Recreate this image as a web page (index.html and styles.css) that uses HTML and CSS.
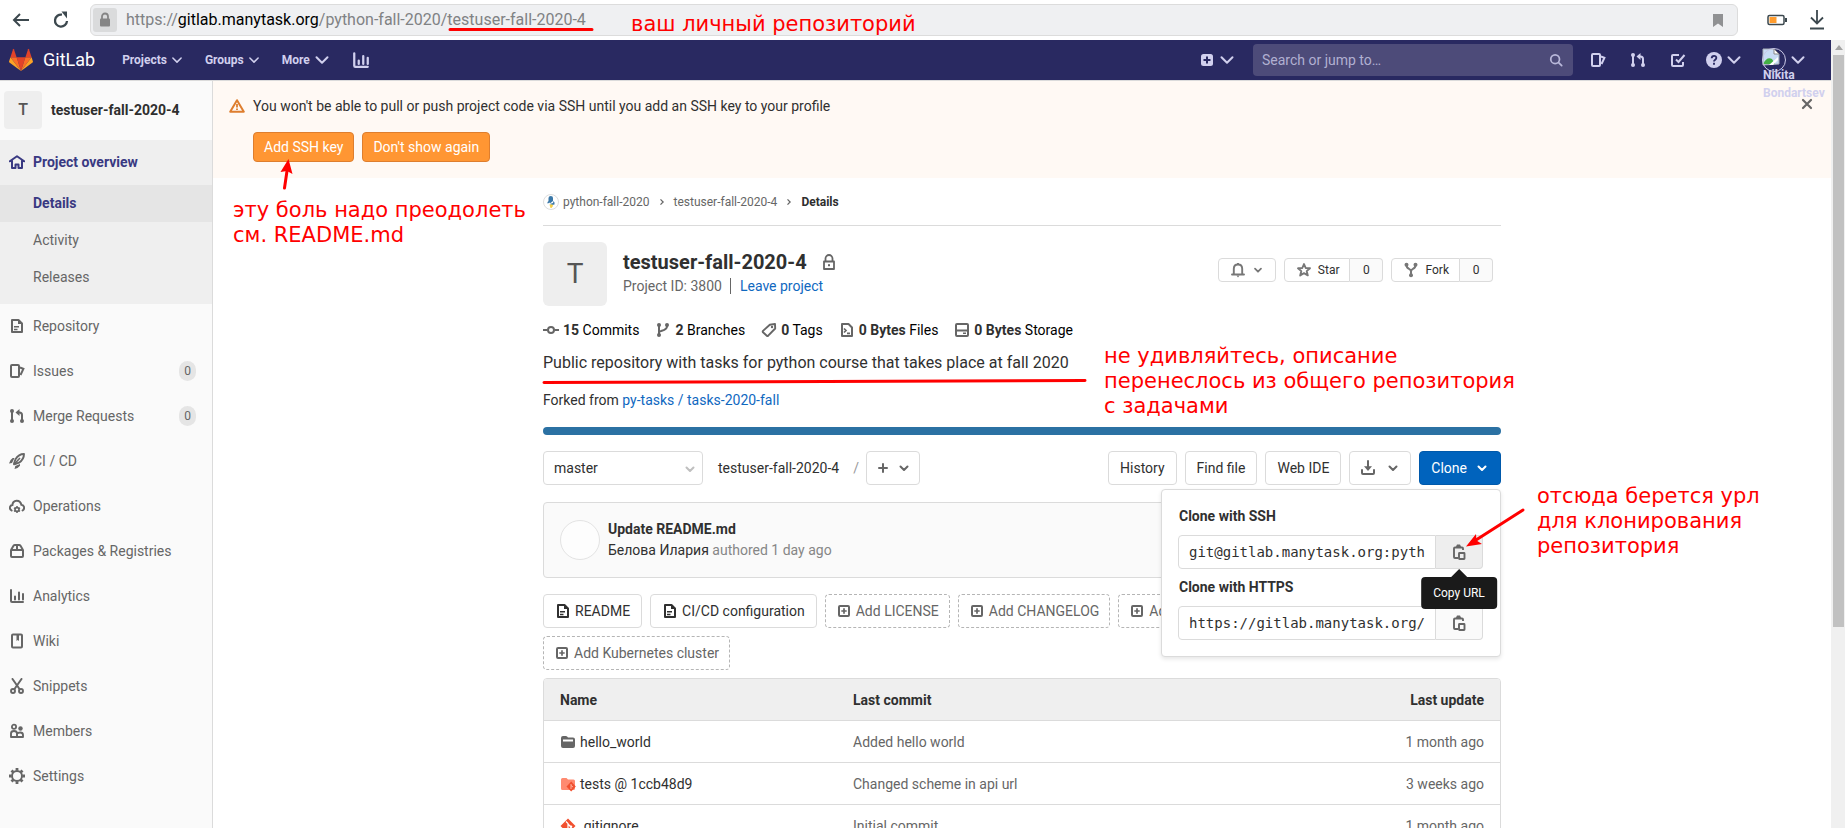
FILE: index.html
```html
<!DOCTYPE html>
<html lang="en">
<head>
<meta charset="utf-8">
<title>testuser-fall-2020-4 · GitLab</title>
<link rel="stylesheet" href="styles.css">
</head>
<body>
<svg class="sprite" aria-hidden="true">
  <symbol id="chevron" viewBox="0 0 16 16"><path d="M4 6.300 8 10.300 12 6.300" fill="none" stroke="currentColor" stroke-width="2.300" stroke-linecap="round" stroke-linejoin="round"/></symbol>
  <symbol id="chevron-wide" viewBox="0 0 16 16"><path d="M2.500 5.300 8 10.800l5.500-5.500" fill="none" stroke="currentColor" stroke-width="2" stroke-linecap="round" stroke-linejoin="round"/></symbol>
  <symbol id="angle-right" viewBox="0 0 16 16"><path d="m6 4.500 3.500 3.500L6 11.500" fill="none" stroke="currentColor" stroke-width="1.700"/></symbol>
  <symbol id="home" viewBox="0 0 16 16"><path d="M.8 7.300 8 2.200l7.200 5.100M3 6.500V14h3.500v-3.500h3V14H13V6.500" fill="none" stroke="currentColor" stroke-width="2" stroke-linejoin="round" stroke-linecap="round"/></symbol>
  <symbol id="doc" viewBox="0 0 16 16"><path d="M3 2h6.500L13 5.500V14H3z" fill="none" stroke="currentColor" stroke-width="2" stroke-linejoin="round"/><path d="M9 2v4h4M5 8h5v1.500H5zM5 10.800h3.500v1.500H5z" fill="currentColor"/></symbol>
  <symbol id="issues" viewBox="0 0 16 16"><rect x="2" y="2" width="8" height="12" rx="1" fill="none" stroke="currentColor" stroke-width="2"/><path d="m11 4.500 3.400 1.300L11.500 12" fill="none" stroke="currentColor" stroke-width="2"/></symbol>
  <symbol id="merge" viewBox="0 0 16 16"><path d="M3 3v10M8 4.500h2.500Q13 4.500 13 7v6" fill="none" stroke="currentColor" stroke-width="2"/><path d="m10.500 1-4 3.500 4 3.500z" fill="currentColor"/><g fill="currentColor"><circle cx="3" cy="3" r="2"/><circle cx="3" cy="13" r="2"/><circle cx="13" cy="13" r="2"/></g></symbol>
  <symbol id="rocket" viewBox="0 0 16 16"><path d="M15 1c-4 0-6.500 1.800-8.500 5.300L5 10.500 6 11l4-1.300C13.400 7.500 15 5 15 1z" fill="none" stroke="currentColor" stroke-width="1.900" stroke-linejoin="round"/><path d="m11 5-6.500 7" stroke="currentColor" stroke-width="1.600"/><path d="M5.500 5H3.700Q.5 7 0 10.500l3-.5zM11 11v1.800Q9 15.600 5.500 16l.8-3z" fill="currentColor"/></symbol>
  <symbol id="cloud" viewBox="0 0 16 16"><path d="M2.600 12.500C-.5 10.500 1 7.300 3.400 7 3.800 1.500 11 1 12.400 6.800c3 .4 3.700 3.900 1.200 5.700" fill="none" stroke="currentColor" stroke-width="2" stroke-linecap="round"/><circle cx="8" cy="11.500" r="2" fill="none" stroke="currentColor" stroke-width="1.600"/><path d="M8 8v7M5 9.800l6 3.500M11 9.800l-6 3.500" stroke="currentColor" stroke-width="1.500"/><circle cx="8" cy="11.500" r="1.100" fill="#fafafa"/></symbol>
  <symbol id="package" viewBox="0 0 16 16"><path d="M2 7h12v6q0 1-1 1H3q-1 0-1-1zM2 7l2.500-4.200Q5 2 6 2h4q1 0 1.500.8L14 7M8 2v5" fill="none" stroke="currentColor" stroke-width="2" stroke-linejoin="round"/></symbol>
  <symbol id="chart" viewBox="0 0 16 16"><path d="M2 2v11q0 1 1 1h11M6 8.500v3M10 4.500v7M14 6v5.500" fill="none" stroke="currentColor" stroke-width="2" stroke-linecap="round"/></symbol>
  <symbol id="book" viewBox="0 0 16 16"><rect x="3" y="1.500" width="10" height="13" rx="1" fill="none" stroke="currentColor" stroke-width="2"/><path d="M7.500 2h2.500v6L8.700 7 7.500 8z" fill="currentColor"/></symbol>
  <symbol id="scissors" viewBox="0 0 16 16"><path d="m3.500 1 7 10M12.500 1l-7 10" stroke="currentColor" stroke-width="2" stroke-linecap="round"/><circle cx="4" cy="13" r="2" fill="none" stroke="currentColor" stroke-width="1.900"/><circle cx="12" cy="13" r="2" fill="none" stroke="currentColor" stroke-width="1.900"/></symbol>
  <symbol id="users" viewBox="0 0 16 16"><circle cx="5" cy="3.800" r="2.100" fill="none" stroke="currentColor" stroke-width="1.800"/><circle cx="11.500" cy="5.500" r="2.200" fill="currentColor"/><path d="M2 14V10.500q0-2.500 3-2.500t3 2.500V14zM8 14h6v-2q0-2.500-2.800-2.500T8.500 11" fill="none" stroke="currentColor" stroke-width="1.900" stroke-linejoin="round"/></symbol>
  <symbol id="gear" viewBox="0 0 16 16"><circle cx="8" cy="8" r="5" fill="none" stroke="currentColor" stroke-width="2"/><path d="M8 0v2.500M8 13.500V16M0 8h2.500M13.500 8H16M2.500 2.500l1.800 1.800M11.700 11.700l1.800 1.800M13.500 2.500l-1.800 1.800M4.300 11.700l-1.800 1.800" stroke="currentColor" stroke-width="2.800"/></symbol>
  <symbol id="warning" viewBox="0 0 16 16"><path d="M8 2.200 14.800 13.700H1.200z" fill="none" stroke="currentColor" stroke-width="2" stroke-linejoin="round"/><path d="M8 6v3.600M8 10.500v1.600" stroke="currentColor" stroke-width="1.800"/></symbol>
  <symbol id="lock" viewBox="0 0 16 16"><path d="M4.500 7V4.500a3.500 3.500 0 0 1 7 0V7M3 7.500h10V15H3z" fill="none" stroke="currentColor" stroke-width="1.800" stroke-linejoin="round"/><rect x="7" y="10.200" width="2" height="2" fill="currentColor"/></symbol>
  <symbol id="commit" viewBox="0 0 16 16"><circle cx="8" cy="8" r="3" fill="none" stroke="currentColor" stroke-width="2"/><path d="M0 8h4.500M11.500 8H16" stroke="currentColor" stroke-width="2"/></symbol>
  <symbol id="branch" viewBox="0 0 16 16"><path d="M4 3v10M4 10.500c0-2 8-1.500 8-6V3" fill="none" stroke="currentColor" stroke-width="2"/><g fill="currentColor"><circle cx="4" cy="3" r="2"/><circle cx="4" cy="13" r="2"/><circle cx="12" cy="3" r="2"/></g></symbol>
  <symbol id="tag" viewBox="0 0 16 16"><path d="M8.800 2.800 14 2l.2 4.500-7 7.200q-.7.600-1.400 0L2 10.300q-.6-.7 0-1.400z" fill="none" stroke="currentColor" stroke-width="1.900" stroke-linejoin="round"/><circle cx="11" cy="5" r="1.200" fill="currentColor"/></symbol>
  <symbol id="code-file" viewBox="0 0 16 16"><path d="M3 2h6.500L13 5.500V14H3z" fill="none" stroke="currentColor" stroke-width="2" stroke-linejoin="round"/><path d="m5 6.500 2 2-2 2M8 11.300h3" fill="none" stroke="currentColor" stroke-width="1.700"/></symbol>
  <symbol id="disk" viewBox="0 0 16 16"><path d="M2 3q0-1 1-1h10q1 0 1 1v10q0 1-1 1H3q-1 0-1-1zM2 8.500h12" fill="none" stroke="currentColor" stroke-width="2"/><path d="M9 10.500h3V12H9z" fill="currentColor"/></symbol>
  <symbol id="bell" viewBox="0 0 16 16"><path d="M2 12.500h12M3.800 12V6.800C3.800 4 5.500 2.500 8 2.500s4.200 1.500 4.200 4.300V12" fill="none" stroke="currentColor" stroke-width="1.900" stroke-linecap="round"/><path d="M6.500 13.500h3L8 15.500zM7 1h2v2H7z" fill="currentColor"/></symbol>
  <symbol id="star" viewBox="0 0 16 16"><path d="m8 2 1.700 4 4.300.3-3.300 2.800 1.100 4.300L8 11.100l-3.800 2.300 1.100-4.300L2 6.300 6.300 6z" fill="none" stroke="currentColor" stroke-width="1.900" stroke-linejoin="round"/></symbol>
  <symbol id="fork" viewBox="0 0 16 16"><path d="M3.500 3c0 5 4.500 3 4.500 6.500V13M12.500 3c0 5-4.500 3-4.500 6.500" fill="none" stroke="currentColor" stroke-width="2"/><g fill="currentColor"><circle cx="3.500" cy="2.800" r="2"/><circle cx="12.500" cy="2.800" r="2"/><circle cx="8" cy="13.200" r="2"/></g></symbol>
  <symbol id="plus" viewBox="0 0 16 16"><path d="M8 4v8M4 8h8" stroke="currentColor" stroke-width="2" stroke-linecap="round"/></symbol>
  <symbol id="plus-square-o" viewBox="0 0 16 16"><rect x="3" y="3" width="10" height="10" rx="1" fill="none" stroke="currentColor" stroke-width="2"/><path d="M8 5.300v5.400M5.300 8h5.400" stroke="currentColor" stroke-width="1.700"/></symbol>
  <symbol id="plus-square" viewBox="0 0 16 16"><rect x="2" y="2" width="12" height="12" rx="2.500" fill="currentColor"/><path d="M8 4.500v7M4.500 8h7" stroke="#292961" stroke-width="2"/></symbol>
  <symbol id="download" viewBox="0 0 16 16"><path d="M8 1v7M2 10v3q0 1 1 1h10q1 0 1-1v-3" fill="none" stroke="currentColor" stroke-width="2" stroke-linecap="round"/><path d="M4 6.300h8L8 11z" fill="currentColor"/></symbol>
  <symbol id="copy" viewBox="0 0 16 16"><path d="M7 14H4q-1 0-1-1V4.500q0-1 1-1h7q1 0 1 1V6" fill="none" stroke="currentColor" stroke-width="1.900"/><path d="M5 4V2.500L6 .500h3l1 2V4z" fill="currentColor"/><rect x="8" y="9" width="5.500" height="6" rx=".5" fill="none" stroke="currentColor" stroke-width="1.900"/></symbol>
  <symbol id="search" viewBox="0 0 16 16"><circle cx="7" cy="7" r="5" fill="none" stroke="currentColor" stroke-width="2"/><path d="m11 11 3.500 3.500" stroke="currentColor" stroke-width="2" stroke-linecap="round"/></symbol>
  <symbol id="todo" viewBox="0 0 16 16"><path d="M9 3H3q-1 0-1 1v9q0 1 1 1h9q1 0 1-1v-3" fill="none" stroke="currentColor" stroke-width="2"/><path d="m6 7.500 2.500 2.500L14.500 3" fill="none" stroke="currentColor" stroke-width="2"/></symbol>
  <symbol id="help" viewBox="0 0 16 16"><circle cx="8" cy="8" r="8" fill="currentColor"/><path d="M5.700 6.300C5.800 2.900 10.500 3.200 10.300 6 10.200 7.700 8 7.700 8 9.600M8 10.800v1.900" fill="none" stroke="#292961" stroke-width="1.900"/></symbol>
  <symbol id="close" viewBox="0 0 16 16"><path d="m4 4 8 8M12 4l-8 8" stroke="currentColor" stroke-width="2.200" stroke-linecap="round"/></symbol>
  <symbol id="folder" viewBox="0 0 16 16"><path d="M1 4q0-2 2-2h3q1.200 0 2 1.500h5q2 0 2 2V12q0 2-2 2H3q-2 0-2-2z" fill="#666"/><path d="M3 5.500h10v2H3z" fill="#fff"/></symbol>
  <symbol id="submodule" viewBox="0 0 16 16"><path d="M1 3.500Q1 2 2.500 2h4L8 3.500h5.500Q15 3.500 15 5v7.500q0 1.500-1.500 1.500h-11Q1 14 1 12.500z" fill="#ff8a70"/><path d="m11.200 5.500 4.600 5-4.600 5-4.700-5z" fill="#f1502f"/><path d="M11 8v5M11 9.500l2 1.500" stroke="#ffc9ba" stroke-width=".8"/></symbol>
  <symbol id="git" viewBox="0 0 16 16"><path d="m8 .5 7.500 7.500L8 15.500.500 8z" fill="#f1502f"/><path d="M6 3.500 8 5.500V12M8 6l3 3" stroke="#fff" stroke-width="1.200" fill="none"/><circle cx="8" cy="11.500" r="1.300" fill="#fff"/><circle cx="11" cy="8.700" r="1.300" fill="#fff"/></symbol>
</svg>

<div class="window">
  <header class="browser">
    <button class="browser-btn" aria-label="Back"><svg class="i20" viewBox="0 0 20 20"><path d="M19 10H4M10 4 4 10l6 6" fill="none" stroke="#3c484e" stroke-width="2"/></svg></button>
    <button class="browser-btn" aria-label="Reload"><svg class="i20" viewBox="0 0 20 20"><path d="M12 4.700A6 6 0 1 0 17 11" fill="none" stroke="#3c484e" stroke-width="2.300"/><path d="M11.500 1.500h5.500v7z" fill="#3c484e"/></svg></button>
    <div class="address">
      <span class="lock-box"><svg viewBox="0 0 12 16"><path d="M3 7V4.500a3 3 0 0 1 6 0V7" fill="none" stroke="#858585" stroke-width="1.800"/><rect x="1" y="6.500" width="10" height="8" rx="1" fill="#858585"/></svg></span>
      <span class="url">https://<b>gitlab.manytask.org</b>/python-fall-2020/testuser-fall-2020-4</span>
      <svg class="bookmark" viewBox="0 0 10 13"><path d="M0 0h10v13L5 9.500 0 13z" fill="#909193"/></svg>
    </div>
    <svg class="battery" viewBox="0 0 20 12"><rect x="1" y="1.500" width="16" height="9" rx="1.500" fill="none" stroke="#3c484e" stroke-width="1.500"/><path d="M18 4h2v4h-2z" fill="#3c484e"/><path d="M2.500 3h7v6h-7z" fill="#ff9c2e"/></svg>
    <svg class="save" viewBox="0 0 16 20"><path d="M8 0v13M2 7.500l6 6 6-6M1 18.500h14" fill="none" stroke="#3c484e" stroke-width="1.800"/></svg>
  </header>

  <div class="page">
    <nav class="navbar">
      <a class="brand" href="#"><svg class="logo" viewBox="0 0 36 36"><path d="M18 34.400 24.600 14H11.400z" fill="#e24329"/><path d="M18 34.400 11.400 14H2.100z" fill="#fc6d26"/><path d="M2.100 14 .100 20.200q-.3.900.5 1.400L18 34.400z" fill="#fca326"/><path d="M2.100 14h9.300l-4-12.300q-.700-1.200-1.300 0z" fill="#e24329"/><path d="M18 34.400 24.600 14h9.300z" fill="#fc6d26"/><path d="m33.900 14 2 6.200q.3.900-.5 1.400L18 34.400z" fill="#fca326"/><path d="M33.900 14h-9.300l4-12.300q.700-1.200 1.300 0z" fill="#e24329"/></svg><span>GitLab</span></a>
      <ul class="menu">
        <li><button>Projects<svg class="i12"><use href="#chevron-wide"/></svg></button></li>
        <li><button>Groups<svg class="i12"><use href="#chevron-wide"/></svg></button></li>
        <li><button>More<svg class="i16"><use href="#chevron-wide"/></svg></button></li>
        <li><a href="#" aria-label="Analytics"><svg class="i18"><use href="#chart"/></svg></a></li>
      </ul>
      <button class="new" aria-label="New"><svg class="i16"><use href="#plus-square"/></svg><svg class="i16"><use href="#chevron-wide"/></svg></button>
      <label class="search"><input type="text" placeholder="Search or jump to…" aria-label="Search"><svg class="i14"><use href="#search"/></svg></label>
      <div class="tools">
        <a href="#" aria-label="Issues"><svg class="i16"><use href="#issues"/></svg></a>
        <a href="#" aria-label="Merge requests"><svg class="i16"><use href="#merge"/></svg></a>
        <a href="#" aria-label="To-Do List"><svg class="i16"><use href="#todo"/></svg></a>
      </div>
      <button class="help" aria-label="Help"><svg class="i16"><use href="#help"/></svg><svg class="i16"><use href="#chevron-wide"/></svg></button>
      <button class="user"><svg class="portrait" viewBox="0 0 24 24"><path d="M1 1h11l5 5v10L1 17z" fill="#c8dcf5" stroke="#a9b0b7"/><path d="M12 1v5h5z" fill="#fff" stroke="#888"/><path d="M1 16q4-8 9-5l3 5z" fill="#44b044"/><path d="m7 17 9-8v3l-5 5z" fill="#fff"/><circle cx="12" cy="12" r="11.500" fill="none" stroke="#c9c8e6"/></svg><svg class="i16"><use href="#chevron-wide"/></svg><span class="alt">Nikita<br>Bondartsev</span></button>
    </nav>

    <div class="body">
      <aside class="sidebar">
        <a class="context" href="#"><span class="avatar">T</span><b>testuser-fall-2020-4</b></a>
        <div class="active-group">
          <a class="item strong" href="#"><svg class="i16"><use href="#home"/></svg>Project overview</a>
          <a class="sub current" href="#">Details</a>
          <a class="sub" href="#">Activity</a>
          <a class="sub" href="#">Releases</a>
        </div>
        <a class="item" href="#"><svg class="i16"><use href="#doc"/></svg>Repository</a>
        <a class="item" href="#"><svg class="i16"><use href="#issues"/></svg>Issues<span class="count">0</span></a>
        <a class="item" href="#"><svg class="i16"><use href="#merge"/></svg>Merge Requests<span class="count">0</span></a>
        <a class="item" href="#"><svg class="i16"><use href="#rocket"/></svg>CI / CD</a>
        <a class="item" href="#"><svg class="i16"><use href="#cloud"/></svg>Operations</a>
        <a class="item" href="#"><svg class="i16"><use href="#package"/></svg>Packages &amp; Registries</a>
        <a class="item" href="#"><svg class="i16"><use href="#chart"/></svg>Analytics</a>
        <a class="item" href="#"><svg class="i16"><use href="#book"/></svg>Wiki</a>
        <a class="item" href="#"><svg class="i16"><use href="#scissors"/></svg>Snippets</a>
        <a class="item" href="#"><svg class="i16"><use href="#users"/></svg>Members</a>
        <a class="item" href="#"><svg class="i16"><use href="#gear"/></svg>Settings</a>
      </aside>

      <main class="content">
        <section class="alert">
          <svg class="i16 warn"><use href="#warning"/></svg>
          <div class="alert-body">
            <p>You won't be able to pull or push project code via SSH until you add an SSH key to your profile</p>
            <div class="alert-actions"><button>Add SSH key</button><button>Don't show again</button></div>
          </div>
          <button class="dismiss" aria-label="Dismiss"><svg class="i16"><use href="#close"/></svg></button>
        </section>

        <div class="container">
          <nav class="crumbs">
            <svg class="i16" viewBox="0 0 16 16"><circle cx="8" cy="8" r="7.500" fill="#fff" stroke="#ddd"/><path d="M5.500 8.500V4q0-2 2.300-2T10 4v3L7.500 9z" fill="#3b78a8"/><path d="M4.500 9.500V8L6 7v2zM6.500 10l3.500-1 .5-2 1 1.500v2L9 11z" fill="#3b78a8"/><path d="M6.500 10.500h3l.5 1.500-1.500 2H7.500z" fill="#f7cf45"/></svg>
            <a href="#">python-fall-2020</a><svg class="i12"><use href="#angle-right"/></svg>
            <a href="#">testuser-fall-2020-4</a><svg class="i12"><use href="#angle-right"/></svg>
            <b>Details</b>
          </nav>

          <section class="project">
            <span class="avatar big">T</span>
            <div class="project-title">
              <h1>testuser-fall-2020-4<svg class="i16"><use href="#lock"/></svg></h1>
              <p><span>Project ID: 3800</span><a href="#">Leave project</a></p>
            </div>
            <div class="project-actions">
              <button class="small" aria-label="Notifications"><svg class="i16"><use href="#bell"/></svg><svg class="i12"><use href="#chevron"/></svg></button>
              <div class="pair"><button class="small"><svg class="i16"><use href="#star"/></svg>Star</button><a href="#">0</a></div>
              <div class="pair"><button class="small"><svg class="i16"><use href="#fork"/></svg>Fork</button><a href="#">0</a></div>
            </div>
          </section>

          <ul class="stats">
            <li><svg class="i16"><use href="#commit"/></svg><span><b>15</b> Commits</span></li>
            <li><svg class="i16"><use href="#branch"/></svg><span><b>2</b> Branches</span></li>
            <li><svg class="i16"><use href="#tag"/></svg><span><b>0</b> Tags</span></li>
            <li><svg class="i16"><use href="#code-file"/></svg><span><b>0 Bytes</b> Files</span></li>
            <li><svg class="i16"><use href="#disk"/></svg><span><b>0 Bytes</b> Storage</span></li>
          </ul>
          <p class="description">Public repository with tasks for python course that takes place at fall 2020</p>
          <p class="forked">Forked from <a href="#">py-tasks / tasks-2020-fall</a></p>
          <div class="languages"></div>

          <div class="toolbar">
            <label class="branch-select"><select aria-label="Branch"><option>master</option></select><svg class="i14"><use href="#chevron"/></svg></label>
            <a class="path" href="#">testuser-fall-2020-4</a><span class="slash">/</span>
            <button class="btn add" aria-label="Add"><svg class="i16"><use href="#plus"/></svg><svg class="i14"><use href="#chevron"/></svg></button>
            <div class="toolbar-right">
              <button class="btn">History</button>
              <button class="btn">Find file</button>
              <button class="btn">Web IDE</button>
              <button class="btn fetch" aria-label="Download"><svg class="i16"><use href="#download"/></svg><svg class="i14"><use href="#chevron"/></svg></button>
              <div class="clone">
                <button class="btn primary">Clone<svg class="i14"><use href="#chevron"/></svg></button>
                <div class="clone-menu">
                  <label for="ssh">Clone with SSH</label>
                  <div class="field"><input id="ssh" type="text" readonly value="git@gitlab.manytask.org:python-fall-2020/testuser-fall-2020-4.git"><button class="hover" aria-label="Copy URL"><svg class="i16"><use href="#copy"/></svg><span class="tooltip">Copy URL</span></button></div>
                  <label for="https">Clone with HTTPS</label>
                  <div class="field"><input id="https" type="text" readonly value="https://gitlab.manytask.org/python-fall-2020/testuser-fall-2020-4.git"><button aria-label="Copy URL"><svg class="i16"><use href="#copy"/></svg></button></div>
                </div>
              </div>
            </div>
          </div>

          <section class="last-commit">
            <span class="round"></span>
            <div><b>Update README.md</b><p><span>Белова Илария</span> authored 1 day ago</p></div>
          </section>

          <div class="pills">
            <a class="btn" href="#"><svg class="i16"><use href="#doc"/></svg>README</a>
            <a class="btn" href="#"><svg class="i16"><use href="#doc"/></svg>CI/CD configuration</a>
            <a class="btn dashed" href="#"><svg class="i16"><use href="#plus-square-o"/></svg>Add LICENSE</a>
            <a class="btn dashed" href="#"><svg class="i16"><use href="#plus-square-o"/></svg>Add CHANGELOG</a>
            <a class="btn dashed" href="#"><svg class="i16"><use href="#plus-square-o"/></svg>Add CONTRIBUTING</a>
            <a class="btn dashed" href="#"><svg class="i16"><use href="#plus-square-o"/></svg>Add Kubernetes cluster</a>
          </div>

          <div class="files">
            <table>
              <thead><tr><th class="name">Name</th><th>Last commit</th><th class="when">Last update</th></tr></thead>
              <tbody>
                <tr><td><a href="#"><svg class="i16"><use href="#folder"/></svg>hello_world</a></td><td>Added hello world</td><td class="when">1 month ago</td></tr>
                <tr><td><a href="#"><svg class="i16"><use href="#submodule"/></svg><span>tests @ <code>1ccb48d9</code></span></a></td><td>Changed scheme in api url</td><td class="when">3 weeks ago</td></tr>
                <tr><td><a href="#"><svg class="i16"><use href="#git"/></svg>.gitignore</a></td><td>Initial commit</td><td class="when">1 month ago</td></tr>
              </tbody>
            </table>
          </div>
        </div>
      </main>
    </div>
  </div>
  <div class="scrollbar"><span class="up"></span><span class="thumb"></span></div>
</div>

<p class="note note-url">ваш личный репозиторий</p>
<p class="note note-ssh">эту боль надо преодолеть<br>см. README.md</p>
<p class="note note-fork">не удивляйтесь, описание<br>перенеслось из общего репозитория<br>с задачами</p>
<p class="note note-clone">отсюда берется урл<br>для клонирования<br>репозитория</p>
<svg class="marks" aria-hidden="true">
  <path d="M450 29.500H592M544 382.500 1085 380.500" fill="none" stroke="red" stroke-width="3" stroke-linecap="round"/>
  <path d="M284.500 188 287 171M1523 510 1476 540" fill="none" stroke="red" stroke-width="3" stroke-linecap="round"/>
  <path d="m288.500 159 4 15-5.500-3-6.500 1zM1466 546.500l10-12.500.5 6.500 5.500 3.500z" fill="red"/>
</svg>
</body>
</html>
```
FILE: styles.css
```css
* { box-sizing: border-box; }
body {
  margin: 0;
  background: #fff;
  color: #303030;
  font: 14px/20px Roboto, "Noto Sans", sans-serif;
}
p, h1, ul { margin: 0; padding: 0; }
ul { list-style: none; }
a { color: inherit; text-decoration: none; }
button { font: inherit; color: inherit; margin: 0; padding: 0; border: 0; background: none; }
svg { flex: none; display: block; }
.sprite { display: none; }
.i12 { width: 12px; height: 12px; }
.i14 { width: 14px; height: 14px; }
.i16 { width: 16px; height: 16px; }
.i18 { width: 18px; height: 18px; }
.i20 { width: 20px; height: 20px; }

.window {
  display: grid;
  grid-template: 40px minmax(0, 1fr) / minmax(0, 1fr) 14px;
  height: 100vh;
  overflow: hidden;
}

/* Browser bar */
.browser {
  grid-column: 1 / -1;
  display: flex;
  align-items: center;
  padding: 0 20px 0 10px;
}
.browser-btn { width: 40px; }
.address {
  flex: 1;
  display: flex;
  align-items: center;
  height: 32px;
  padding: 0 14px 0 2px;
  margin-right: 29px;
  background: #eff0f2;
  border: 1px solid #dcdcdc;
  border-radius: 6px;
}
.lock-box {
  display: flex;
  align-items: center;
  justify-content: center;
  width: 24px;
  height: 24px;
  background: #dadbdc;
  border-radius: 3px;
}
.lock-box svg { width: 12px; height: 16px; }
.url { flex: 1; margin-left: 9px; font-size: 16px; color: #808284; }
.url b { font-weight: 400; color: #000; }
.bookmark { width: 10px; height: 13px; }
.battery { width: 20px; height: 12px; margin-right: 22px; }
.save { width: 16px; height: 20px; }

/* Top navigation */
.page { display: flex; flex-direction: column; min-width: 0; min-height: 0; overflow: hidden; }
.navbar {
  position: relative;
  z-index: 2;
  flex: none;
  display: flex;
  align-items: center;
  height: 40px;
  padding-left: 9px;
  background: #292961;
  color: #d1d0ee;
  font-size: 12px;
  font-weight: 700;
}
.brand { display: flex; align-items: center; gap: 10px; color: #fff; font-size: 18px; font-weight: 400; }
.logo { width: 24px; height: 24px; }
.menu { display: flex; align-items: center; gap: 22px; margin-left: 27px; flex: 1; }
.menu button, .new, .help, .user { display: flex; align-items: center; }
.menu button { gap: 4px; }
.new { gap: 4px; margin-right: 18px; }
.search { position: relative; flex: 0 1 320px; }
.search input {
  width: 100%;
  height: 32px;
  display: block;
  padding: 0 32px 0 9px;
  border: 0;
  border-radius: 4px;
  background: #4d4b79;
  color: #fff;
  font: inherit;
  font-size: 14px;
  font-weight: 400;
}
.search input::placeholder { color: #b1b0d1; }
.search svg { position: absolute; right: 10px; top: 9px; color: #b9b8da; }
.tools { display: flex; gap: 24px; margin: 0 20px 0 17px; }
.help { gap: 4px; margin-right: 20px; }
.user { position: relative; gap: 4px; margin-right: 25px; }
.portrait { width: 24px; height: 24px; }
.alt {
  position: absolute;
  left: 1px;
  top: 18px;
  line-height: 18px;
  text-align: left;
}

/* Sidebar */
.body { flex: 1; display: flex; min-height: 0; border-top: 1px solid #dbdbdb; }
.sidebar {
  flex: 0 0 213px;
  background: #fafafa;
  border-right: 1px solid #dbdbdb;
  color: #666;
}
.context { display: flex; align-items: center; gap: 9px; height: 59px; padding: 0 0 2px 4px; color: #2e2e2e; }
.avatar {
  display: flex;
  align-items: center;
  justify-content: center;
  width: 38px;
  height: 38px;
  border-radius: 4px;
  background: #eee;
  color: #555;
  font-size: 16px;
  font-weight: 500;
}
.active-group { background: #efefef; padding-bottom: 8px; }
.item { display: flex; align-items: center; gap: 8px; height: 45px; padding: 0 16px 2px 9px; }
.strong, .current { color: #393982; font-weight: 700; }
.sub { display: flex; align-items: center; height: 37px; padding: 0 0 2px 33px; }
.current { background: #e5e5e5; }
.count {
  margin-left: auto;
  padding: 0 5px;
  border-radius: 10px;
  background: #e5e5e5;
  font-size: 12px;
}

/* Alert */
.content { flex: 1; min-width: 0; overflow: hidden; }
.alert { display: flex; padding: 15px 16px 16px; background: #fff9f4; }
.warn { color: #de7e2e; margin-top: 2px; }
.alert-body { flex: 1; margin-left: 8px; display: flex; flex-direction: column; gap: 16px; }
.alert-actions { display: flex; gap: 8px; }
.alert-actions button {
  height: 30px;
  padding: 0 10px;
  border: 1px solid #de7e2e;
  border-radius: 4px;
  background: #ff9633;
  color: #fff;
}
.dismiss { align-self: flex-start; color: #666; }

/* Project */
.container { max-width: 990px; margin: 0 auto; padding: 0 16px; }
.crumbs {
  display: flex;
  align-items: center;
  gap: 4px;
  height: 48px;
  border-bottom: 1px solid #dbdbdb;
  color: #666;
  font-size: 12px;
}
.crumbs .i12 { margin: 0 2px; }
.crumbs b { color: #2e2e2e; }
.project { display: flex; margin-top: 16px; }
.avatar.big { width: 64px; height: 64px; border-radius: 6px; font-size: 28px; font-weight: 400; }
.project-title { flex: 1; margin-left: 16px; padding-top: 8px; }
h1 { display: flex; align-items: center; gap: 14px; font-size: 20px; line-height: 24px; }
h1 svg, .stats svg { color: #666; }
.project-title p { display: flex; margin-top: 2px; color: #666; }
.project-title p a { margin: 2px 0 0 8px; padding-left: 9px; border-left: 1px solid #666; height: 16px; line-height: 16px; }
.project-title p a, .forked a { color: #1068bf; }
.project-actions { display: flex; gap: 8px; align-self: flex-start; margin: 16px 8px 0 0; font-size: 12px; }
.small {
  display: flex;
  align-items: center;
  gap: 6px;
  height: 24px;
  padding: 0 11px;
  border: 1px solid #dbdbdb;
  border-radius: 4px;
}
.small svg { color: #777; }
.pair { display: flex; }
.pair .small { border-radius: 4px 0 0 4px; padding: 0 10px 0 11px; }
.pair a {
  width: 33px;
  height: 24px;
  border: 1px solid #dbdbdb;
  border-left: 0;
  border-radius: 0 4px 4px 0;
  background: #fafafa;
  line-height: 22px;
  text-align: center;
}
.stats { display: flex; gap: 16px; margin-top: 14px; color: #000; }
.stats li { display: flex; align-items: center; gap: 4px; }
.stats b { color: #303030; }
.description { margin-top: 11px; font-size: 16px; line-height: 24px; }
.forked { margin-top: 15px; }
.languages { height: 8px; margin-top: 17px; border-radius: 4px; background: #2b71a3; }

/* Toolbar */
.btn {
  display: flex;
  align-items: center;
  justify-content: center;
  height: 34px;
  padding: 0 11px;
  border: 1px solid #dbdbdb;
  border-radius: 4px;
  background: #fff;
}
.toolbar { display: flex; align-items: center; margin-top: 16px; }
.branch-select { position: relative; width: 160px; }
.branch-select select {
  display: block;
  width: 100%;
  height: 34px;
  padding: 0 10px;
  appearance: none;
  border: 1px solid #dbdbdb;
  border-radius: 4px;
  background: #fff;
  color: inherit;
  font: inherit;
}
.branch-select svg { position: absolute; right: 6px; top: 11px; color: #bfbfbf; }
.path { margin-left: 15px; }
.slash { margin: 0 7px 0 14px; color: #999; }
.add { gap: 6px; padding: 0 8px; }
.add svg, .fetch svg { color: #666; }
.toolbar-right { display: flex; gap: 8px; margin-left: auto; }
.toolbar-right .fetch { gap: 10px; padding: 0 10px; }
.clone { position: relative; }
.clone .primary { gap: 8px; background: #0063bd; border-color: #0059ab; color: #fff; }
.clone-menu {
  position: absolute;
  z-index: 1;
  right: 0;
  top: 38px;
  width: 340px;
  padding: 16px 17px 16px 16px;
  border: 1px solid #dbdbdb;
  border-radius: 4px;
  background: #fff;
  box-shadow: 0 2px 4px rgba(0, 0, 0, 0.1);
}
.clone-menu label { display: block; margin: 0 0 9px 1px; font-weight: 700; }
.field { display: flex; margin-bottom: 8px; }
.field:last-child { margin-bottom: 0; }
.field input {
  flex: 1;
  min-width: 0;
  height: 34px;
  padding: 0 10px;
  border: 1px solid #dbdbdb;
  border-radius: 4px 0 0 4px;
  color: #303030;
  font: 14px "DejaVu Sans Mono", monospace;
}
.field button {
  position: relative;
  display: flex;
  align-items: center;
  justify-content: center;
  width: 47px;
  border: 1px solid #dbdbdb;
  border-left: 0;
  border-radius: 0 4px 4px 0;
  background: #fafafa;
  color: #666;
}
.field .hover { background: #eee; }
.tooltip {
  position: absolute;
  z-index: 1;
  top: 41px;
  left: 50%;
  transform: translateX(-50%);
  padding: 6px 12px;
  border-radius: 4px;
  background: #1a1a1a;
  color: #fff;
  font-size: 12px;
  white-space: nowrap;
}
.tooltip::before {
  content: "";
  position: absolute;
  top: -8px;
  left: 50%;
  margin-left: -8px;
  border: 8px solid transparent;
  border-top: 0;
  border-bottom-color: #1a1a1a;
}

/* Last commit and shortcuts */
.last-commit {
  display: flex;
  align-items: center;
  gap: 8px;
  height: 76px;
  margin-top: 17px;
  padding: 0 16px 1px;
  border: 1px solid #dbdbdb;
  border-radius: 4px;
  background: #fafafa;
}
.round { width: 40px; height: 40px; border: 1px solid #e3e3e3; border-radius: 50%; background: #fdfdfd; }
.last-commit p { margin-top: 1px; color: #868686; }
.last-commit p span { color: #303030; }
.pills { display: flex; flex-wrap: wrap; gap: 8px; margin-top: 16px; padding-right: 32px; }
.pills .btn { gap: 4px; }
.pills .dashed { padding: 0 10px; border-style: dashed; border-color: #b5b5b5; color: #666; }

/* Files */
.files { margin-top: 8px; border: 1px solid #dbdbdb; border-radius: 4px; overflow: hidden; }
table { width: 100%; border-collapse: collapse; text-align: left; }
th, td { padding: 11px 16px 10px; border-bottom: 1px solid #dbdbdb; }
th { background: #efefef; }
th.name { width: 293px; }
td { color: #666; }
td a { display: flex; align-items: center; gap: 4px; color: #303030; }
code { font: inherit; }
.when { text-align: right; }

/* Scrollbar */
.scrollbar { background: #f0f0f0; padding: 5px 1px 0 2px; display: flex; flex-direction: column; align-items: center; }
.up { border: 4px solid transparent; border-top: 0; border-bottom: 5px solid #a3a3a3; }
.thumb { width: 100%; height: 73%; margin-top: 5px; background: #c1c1c1; }

/* Remarks over the page */
.note {
  position: absolute;
  z-index: 3;
  color: red;
  font: 21px/25px "DejaVu Sans", sans-serif;
  white-space: nowrap;
}
.note-url { left: 631px; top: 12px; }
.note-ssh { left: 233px; top: 198px; }
.note-fork { left: 1104px; top: 344px; }
.note-clone { left: 1537px; top: 484px; }
.marks { position: absolute; z-index: 3; inset: 0; width: 100%; height: 100vh; pointer-events: none; }
```
